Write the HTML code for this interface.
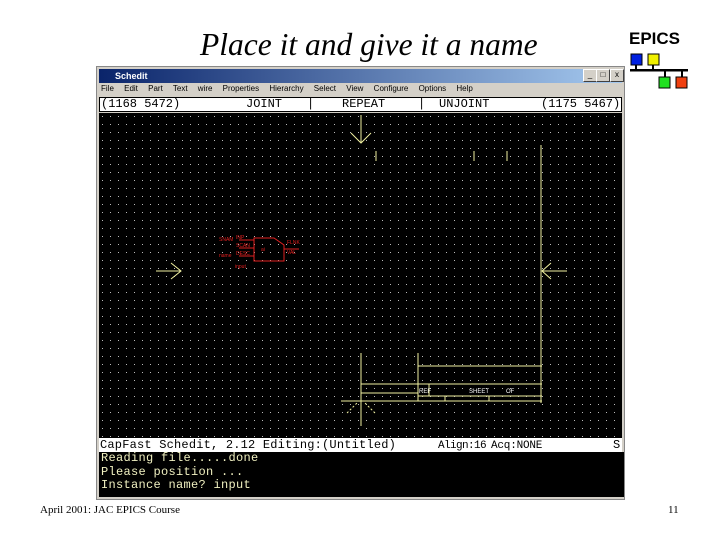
<!DOCTYPE html>
<html><head><style>
body{margin:0;width:720px;height:540px;background:#fff;position:relative;overflow:hidden;font-family:"Liberation Sans",sans-serif}
.t{position:absolute;left:200px;top:27px;font-family:"Liberation Serif",serif;font-style:italic;font-size:31.5px;color:#000}
.win{position:absolute;left:96px;top:66px;width:527px;height:432px;background:#d4d0c8;border:1px solid #888}
.title{position:absolute;left:2px;top:2px;width:523px;height:14px;background:linear-gradient(90deg,#0a246a,#a6caf0);color:#fff;font-size:9px;font-weight:bold;line-height:14px;padding-left:16px;box-sizing:border-box}
.menu{position:absolute;left:4px;top:17px;font-size:8px;word-spacing:8px;color:#000}
.mono{font-family:"Liberation Mono",monospace}
.coord{position:absolute;left:2px;top:30px;width:523px;height:15px;background:#fff;border:1px solid #000;box-sizing:border-box;font-size:12px;line-height:13px;white-space:pre}
.coord span,.status span{position:absolute;top:0}
.canvas{position:absolute;left:2px;top:46px;width:523px;height:325px;background:#000}
.status{position:absolute;left:2px;top:371px;width:523px;height:14px;background:#fff;font-size:12px;line-height:14px;white-space:pre}
.con{position:absolute;left:2px;top:385px;width:523px;height:45px;background:#000;color:#f0f0c0;font-size:12px;line-height:13.5px;white-space:pre;padding-left:2px;letter-spacing:0.3px}
.btn{position:absolute;top:2px;width:12px;height:11px;background:#d4d0c8;border:1px solid #fff;border-right-color:#404040;border-bottom-color:#404040;font-size:8px;line-height:10px;text-align:center;color:#000}
</style></head><body>
<div class="t">Place it and give it a name</div>
<div style="position:absolute;left:629px;top:29px;font-weight:bold;font-size:17px">EPICS</div>
<svg style="position:absolute;left:620px;top:25px" width="80" height="70">
<rect x="11" y="29" width="11" height="11" fill="#0020e0" stroke="#000"/>
<rect x="28" y="29" width="11" height="11" fill="#f0f000" stroke="#000"/>
<line x1="16" y1="40" x2="16" y2="45" stroke="#000" stroke-width="2"/><line x1="33" y1="40" x2="33" y2="45" stroke="#000" stroke-width="2"/>
<rect x="10" y="44" width="58" height="2.5" fill="#000"/>
<line x1="45" y1="46" x2="45" y2="52" stroke="#000" stroke-width="2"/><line x1="62" y1="46" x2="62" y2="52" stroke="#000" stroke-width="2"/>
<rect x="39" y="52" width="11" height="11" fill="#20e020" stroke="#000"/>
<rect x="56" y="52" width="11" height="11" fill="#f04010" stroke="#000"/>
</svg>
<div class="win">
<div class="title">Schedit</div>
<div class="btn" style="left:486px">_</div><div class="btn" style="left:499px">□</div><div class="btn" style="left:513px">x</div>
<div class="menu">File Edit Part Text wire Properties Hierarchy Select View Configure Options Help</div>
<div class="coord mono"><span style="left:1px">(1168 5472)</span><span style="left:146px">JOINT</span><span style="left:207px">|</span><span style="left:242px">REPEAT</span><span style="left:318px">|</span><span style="left:339px">UNJOINT</span><span style="left:441px">(1175 5467)</span></div>
<div class="canvas">
<svg width="523" height="325">
<defs><pattern id="d" width="8" height="8" patternUnits="userSpaceOnUse"><rect x="3" y="3" width="1" height="1" fill="#bbb"/></pattern></defs>
<rect width="523" height="325" fill="url(#d)"/>
<g stroke="#f0f0a0" fill="none" stroke-width="1">
<line x1="262" y1="2" x2="262" y2="30"/><path d="M252 20 L262 30 L272 20"/>
<line x1="277" y1="38" x2="277" y2="48"/><line x1="375" y1="38" x2="375" y2="48"/><line x1="408" y1="38" x2="408" y2="48"/>
<line x1="442" y1="32" x2="442" y2="290"/>
<line x1="57" y1="158" x2="82" y2="158"/><path d="M72 150 L82 158 L72 166"/>
<line x1="443" y1="158" x2="468" y2="158"/><path d="M452 150 L443 158 L452 166"/>
<line x1="262" y1="240" x2="262" y2="313"/>
<line x1="319" y1="240" x2="319" y2="288"/>
<line x1="319" y1="253" x2="443" y2="253"/>
<line x1="262" y1="271" x2="443" y2="271"/>
<line x1="262" y1="280" x2="319" y2="280"/>
<line x1="319" y1="283" x2="443" y2="283"/>
<line x1="242" y1="288" x2="443" y2="288"/>
<line x1="330" y1="271" x2="330" y2="283"/>
<line x1="346" y1="283" x2="346" y2="288"/><line x1="390" y1="283" x2="390" y2="288"/>
<path d="M248 300 L258 290 M276 300 L266 290" stroke-dasharray="2 2"/>
</g>
<g fill="#fff" font-size="6" font-family="Liberation Sans"><text x="320" y="280">REF</text><text x="370" y="280">SHEET</text><text x="407" y="280">OF</text></g>
<g stroke="#e02020" fill="none" font-family="Liberation Sans">
<path d="M155 125 H175 L185 132 V148 H155 Z"/>
<line x1="140" y1="127" x2="155" y2="127"/><line x1="140" y1="135" x2="155" y2="135"/><line x1="140" y1="143" x2="155" y2="143"/>
<line x1="185" y1="136" x2="200" y2="136"/>
<g fill="#e02020" stroke="none" font-size="5"><text x="120" y="128">SNAM</text><text x="137" y="126">INP</text><text x="137" y="134">SCAN</text><text x="120" y="144">name</text><text x="137" y="142">DESC</text><text x="162" y="138">ai</text><text x="188" y="131">FLNK</text><text x="188" y="141">VAL</text><text x="136" y="155">input</text></g>
</g>
</svg>
</div>
<div class="status mono"><span style="left:1px;letter-spacing:0.2px">CapFast Schedit, 2.12 Editing:(Untitled)</span><span style="left:339px;font-size:11px;top:1px;letter-spacing:-0.6px">Align:16</span><span style="left:392px;font-size:11px;top:1px;letter-spacing:-0.2px">Acq:NONE</span><span style="left:514px">S</span></div>
<div class="con mono">Reading file.....done
Please position ...
Instance name? input</div>
</div>
<div style="position:absolute;left:40px;top:504px;font-family:'Liberation Serif',serif;font-size:11px">April 2001: JAC EPICS Course</div>
<div style="position:absolute;left:668px;top:504px;font-family:'Liberation Serif',serif;font-size:11px">11</div>
</body></html>
